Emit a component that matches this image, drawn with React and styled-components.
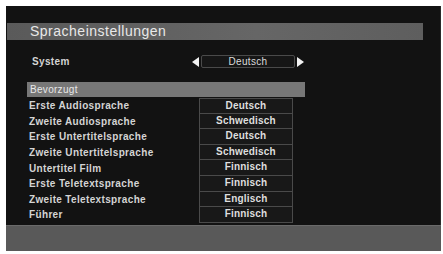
import React from 'react'
import styled, { createGlobalStyle } from 'styled-components'

const GlobalStyle = createGlobalStyle`
  html, body {
    margin: 0;
    padding: 0;
    background: #ffffff;
  }
  body {
    font-family: 'Liberation Sans', Arial, sans-serif;
  }
`

const rows = [
  ['Erste Audiosprache', 'Deutsch'],
  ['Zweite Audiosprache', 'Schwedisch'],
  ['Erste Untertitelsprache', 'Deutsch'],
  ['Zweite Untertitelsprache', 'Schwedisch'],
  ['Untertitel Film', 'Finnisch'],
  ['Erste Teletextsprache', 'Finnisch'],
  ['Zweite Teletextsprache', 'Englisch'],
  ['Führer', 'Finnisch'],
]

const App = () => {
  return (
    <>
      <GlobalStyle />
      <Screen>
        <Panel>
          <TitleBar>Spracheinstellungen</TitleBar>
          <SystemRow>
            <Label>System</Label>
            <Selector>
              <Arrow viewBox="0 0 7 10" width="7" height="10">
                <polygon points="7,0 0,5 7,10" fill="#f2f2f2" />
              </Arrow>
              <ValueBox>Deutsch</ValueBox>
              <Arrow viewBox="0 0 7 10" width="7" height="10">
                <polygon points="0,0 7,5 0,10" fill="#f2f2f2" />
              </Arrow>
            </Selector>
          </SystemRow>
          <Section>
            <SectionBar>Bevorzugt</SectionBar>
            <List>
              {rows.map(([label, value], i) => (
                <Row key={label}>
                  <Label>{label}</Label>
                  <Cell $first={i === 0}>{value}</Cell>
                </Row>
              ))}
            </List>
          </Section>
        </Panel>
        <FooterBar />
      </Screen>
    </>
  )
}

const Screen = styled.div`
  width: 435px;
  height: 245px;
  margin: 6px 0 0 6px;
  display: flex;
  flex-direction: column;
`

const Panel = styled.div`
  height: 219px;
  background-color: #121212;
  box-sizing: border-box;
  padding-top: 17px;
  border-right: 1px solid #2a2a2a;
`

const TitleBar = styled.div`
  width: 416px;
  height: 17px;
  margin-left: 1px;
  box-sizing: border-box;
  padding-left: 23px;
  background: linear-gradient(90deg, #5a5a5a 0%, #666666 60%, #5e5e5e 100%);
  color: #e8e8e8;
  font-size: 14px;
  line-height: 17px;
  letter-spacing: 0.5px;
`

const SystemRow = styled.div`
  display: flex;
  align-items: center;
  height: 13px;
  margin-top: 15px;
  padding-left: 24px;
`

const Label = styled.div`
  width: 160px;
  padding-left: 2px;
  color: #d4d4d4;
  font-size: 10px;
  font-weight: bold;
  letter-spacing: 0.35px;
  white-space: nowrap;
`

const Selector = styled.div`
  display: flex;
  align-items: center;
  gap: 2px;
`

const Arrow = styled.svg`
  display: block;
  flex: none;
`

const ValueBox = styled.div`
  width: 94px;
  height: 13px;
  box-sizing: border-box;
  border: 1px solid #4a4a4a;
  border-radius: 2px;
  background: #161616;
  color: #dcdcdc;
  font-size: 10px;
  line-height: 11px;
  text-align: center;
  letter-spacing: 0.3px;
`

const Section = styled.div`
  width: 278px;
  margin: 14px 0 0 21px;
`

const SectionBar = styled.div`
  height: 15px;
  background-color: #777777;
  padding-left: 3px;
  color: #e8e8e8;
  font-size: 10px;
  line-height: 15px;
  letter-spacing: 0.3px;
`

const List = styled.div`
  display: flex;
  flex-direction: column;
  margin-top: 1px;
`

const Row = styled.div`
  display: flex;
  align-items: center;
  height: 15.6px;

  ${Label} {
    width: 170px;
  }
`

const Cell = styled.div`
  width: 94px;
  height: 15.6px;
  box-sizing: border-box;
  border: 1px solid #4a4a4a;
  border-top-width: ${props => (props.$first ? '1px' : '0')};
  background: #181818;
  color: #dedede;
  font-size: 10px;
  font-weight: bold;
  line-height: 14px;
  text-align: center;
  letter-spacing: 0.2px;
`

const FooterBar = styled.div`
  flex: 1;
  background-color: #595959;
  border-top: 1px solid #6a6a6a;
`

export default App
